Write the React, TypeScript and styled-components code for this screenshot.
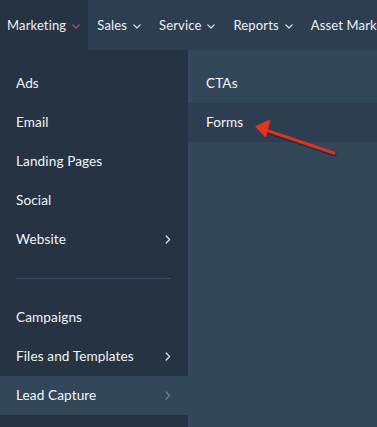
import React from "react";
import styled, { createGlobalStyle } from "styled-components";

const Global = createGlobalStyle`
  html, body { margin: 0; padding: 0; }
  body {
    background: #253342;
    font-family: Lato, "Open Sans", "Noto Sans", sans-serif;
    -webkit-font-smoothing: antialiased;
  }
`;

const Page = styled.div`
  position: relative;
  width: 377px;
  height: 427px;
  overflow: hidden;
  display: flex;
  flex-direction: column;
  background: #253342;
`;

const NavBar = styled.nav`
  height: 50px;
  flex: 0 0 50px;
  display: flex;
  align-items: stretch;
  background: #2d3e50;
  white-space: nowrap;
`;

const NavItem = styled.div<{ $active?: boolean; $first?: boolean }>`
  display: flex;
  align-items: center;
  gap: 6px;
  padding-left: ${(p) => (p.$first ? "7px" : "9px")};
  padding-right: ${(p) => (p.$first ? "8px" : "9px")};
  padding-bottom: 1px;
  background: ${(p) => (p.$active ? "#253342" : "transparent")};
  color: #eef2f6;
  font-size: 13px;
  letter-spacing: 0.15px;
`;

const Dropdown = styled.div`
  flex: 1;
  display: flex;
  align-items: stretch;
`;

const Menu = styled.ul`
  list-style: none;
  margin: 0;
  padding: 14px 0 0;
  width: 188px;
  flex: 0 0 188px;
  background: #253342;
`;

const SubMenu = styled.ul`
  list-style: none;
  margin: 0;
  padding: 14px 0 0;
  flex: 1;
  background: #33475b;
`;

const Row = styled.li<{ $bg?: string; $indent?: number }>`
  height: 39px;
  display: flex;
  align-items: center;
  justify-content: space-between;
  padding: 0 17px 1px ${(p) => p.$indent ?? 16}px;
  background: ${(p) => p.$bg ?? "transparent"};
  color: #f2f5f8;
  font-size: 13.6px;
  letter-spacing: 0.1px;
  box-sizing: border-box;
`;

const Divider = styled.li`
  height: 39px;
  display: flex;
  align-items: center;
  padding: 0 17px 0 16px;
  &::after {
    content: "";
    flex: 1;
    height: 1px;
    background: #3a4d61;
  }
`;

const Overlay = styled.svg`
  position: absolute;
  left: 0;
  top: 0;
  pointer-events: none;
`;

const ChevronDown = ({ color }: { color: string }) => (
  <svg width="8" height="5" viewBox="0 0 8 5" style={{ marginTop: 3 }}>
    <path d="M0.8 0.8 L4 4 L7.2 0.8" fill="none" stroke={color} strokeWidth="1.2" strokeLinecap="round" strokeLinejoin="round" />
  </svg>
);

const ChevronRight = ({ color }: { color: string }) => (
  <svg width="6" height="9" viewBox="0 0 6 9">
    <path d="M1.2 1 L4.6 4.5 L1.2 8" fill="none" stroke={color} strokeWidth="1.3" strokeLinecap="round" strokeLinejoin="round" />
  </svg>
);

const navItems = [
  { label: "Marketing", active: true },
  { label: "Sales" },
  { label: "Service" },
  { label: "Reports" },
  { label: "Asset Marketplace", noChevron: true },
];

type MenuEntry =
  | { kind: "item"; label: string; chevron?: boolean; active?: boolean }
  | { kind: "divider" };

const menu: MenuEntry[] = [
  { kind: "item", label: "Ads" },
  { kind: "item", label: "Email" },
  { kind: "item", label: "Landing Pages" },
  { kind: "item", label: "Social" },
  { kind: "item", label: "Website", chevron: true },
  { kind: "divider" },
  { kind: "item", label: "Campaigns" },
  { kind: "item", label: "Files and Templates", chevron: true },
  { kind: "item", label: "Lead Capture", chevron: true, active: true },
];

const sub = [
  { label: "CTAs" },
  { label: "Forms", hover: true },
];

export default function App() {
  return (
    <>
      <Global />
      <Page>
        <NavBar>
          {navItems.map((n, i) => (
            <NavItem key={n.label} $active={n.active} $first={i === 0}>
              {n.label}
              {!n.noChevron && <ChevronDown color={n.active ? "#c2465c" : "#dfe6ee"} />}
            </NavItem>
          ))}
        </NavBar>
        <Dropdown>
          <Menu>
            {menu.map((m, i) =>
              m.kind === "divider" ? (
                <Divider key={"d" + i} />
              ) : (
                <Row key={m.label} $bg={m.active ? "#33475b" : undefined}>
                  <span>{m.label}</span>
                  {m.chevron && <ChevronRight color={m.active ? "#6e7f90" : "#d8e0e8"} />}
                </Row>
              )
            )}
          </Menu>
          <SubMenu>
            {sub.map((s) => (
              <Row key={s.label} $indent={18} $bg={s.hover ? "#2d3e50" : undefined}>
                <span>{s.label}</span>
              </Row>
            ))}
          </SubMenu>
        </Dropdown>
        <Overlay width="377" height="427" viewBox="0 0 377 427">
          <g opacity="0.45">
            <line x1="334" y1="154" x2="266" y2="131" stroke="#111a24" strokeWidth="5" strokeLinecap="round" />
          </g>
          <line x1="334" y1="153" x2="264" y2="129.5" stroke="#e0321f" strokeWidth="3" strokeLinecap="round" />
          <path d="M255.5 126.5 L270 120 L265.5 137 Z" fill="#e8341f" stroke="#e0321f" strokeWidth="1" strokeLinejoin="round" />
        </Overlay>
      </Page>
    </>
  );
}
